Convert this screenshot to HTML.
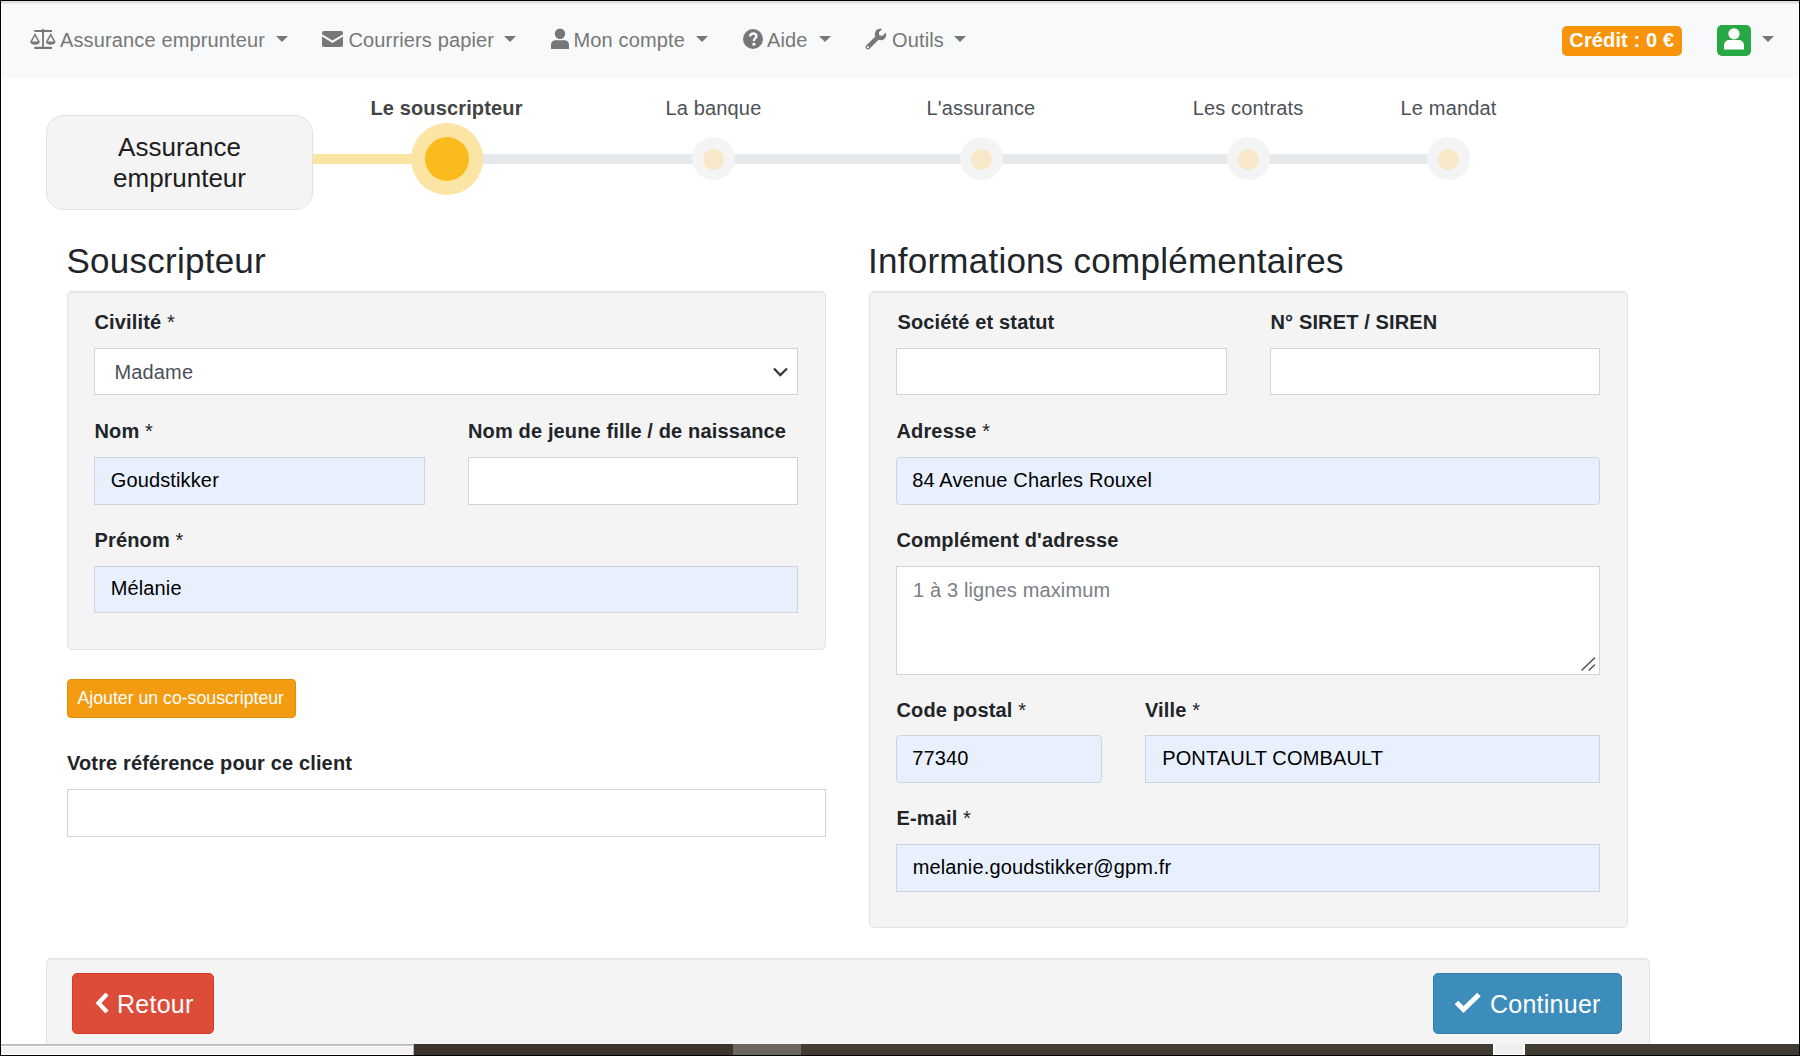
<!DOCTYPE html>
<html><head><meta charset="utf-8"><style>
html,body{margin:0;padding:0;width:1800px;height:1056px;overflow:hidden;background:#fff;position:relative}
body{font-family:"Liberation Sans",sans-serif}
.t{position:absolute;white-space:nowrap}
.r{position:absolute}
</style></head><body>
<div class="r" style="left:0px;top:0px;width:1800px;height:1px;background:#000"></div>
<div class="r" style="left:0px;top:0px;width:1px;height:1056px;background:#000"></div>
<div class="r" style="left:1799px;top:0px;width:1px;height:1056px;background:#000"></div>
<div class="r" style="left:1px;top:1px;width:1798px;height:1px;background:#dfe0e2"></div>
<div class="r" style="left:1px;top:2px;width:1798px;height:1px;background:#dadbdd"></div>
<div class="r" style="left:1px;top:3px;width:1798px;height:1px;background:#ebecee"></div>
<div class="r" style="left:2px;top:4px;width:1796px;height:74px;background:#f8f9fa"></div>
<svg class="r" style="left:30px;top:28px" width="26" height="22" viewBox="0 0 26 22"><g fill="#777">
<rect x="4.3" y="2" width="17.7" height="2"/><path d="M13 0.6 L15.2 3 L13 5.6 L10.8 3Z"/><rect x="12.1" y="4" width="1.8" height="15"/><rect x="4.3" y="18.8" width="17.7" height="2.2"/>
<path d="M1 13.8 L5 6.6 L9 13.8" fill="none" stroke="#777" stroke-width="1.5"/><path d="M0.2 13.5 H9.9 C9.7 17.8 0.4 17.8 0.2 13.5Z"/>
<path d="M16.7 13.8 L20.7 6.6 L24.7 13.8" fill="none" stroke="#777" stroke-width="1.5"/><path d="M15.9 13.5 H25.6 C25.4 17.8 16.1 17.8 15.9 13.5Z"/>
</g></svg>
<svg class="r" style="left:322px;top:31px" width="21" height="16" viewBox="0 0 21 16"><path fill="#777" d="M2 0 H19 A2 2 0 0 1 21 2 V3.2 L10.5 9.6 L0 3.2 V2 A2 2 0 0 1 2 0Z M0 5.6 L10.5 12 L21 5.6 V14 A2 2 0 0 1 19 16 H2 A2 2 0 0 1 0 14Z"/></svg>
<svg class="r" style="left:551px;top:28px" width="18" height="21" viewBox="0 0 18 21"><g fill="#777"><circle cx="9" cy="5.7" r="5.2"/><path d="M0 21 V17 C0 13.5 2.5 12.2 5 12.2 H13 C15.5 12.2 18 13.5 18 17 V21Z"/></g></svg>
<svg class="r" style="left:743px;top:29px" width="20" height="20" viewBox="0 0 20 20"><circle cx="10" cy="10" r="10" fill="#777"/><path d="M7 7.6 C7 5.6 8.4 4.5 10.2 4.5 C12.1 4.5 13.4 5.6 13.4 7.2 C13.4 9.3 10.9 9.5 10.9 11.4 V12" fill="none" stroke="#f8f9fa" stroke-width="2.4"/><circle cx="10.9" cy="15.2" r="1.6" fill="#f8f9fa"/></svg>
<svg class="r" style="left:865px;top:28px" width="22" height="22" viewBox="0 0 22 22"><path fill="#777" d="M20.8 4.6 L17.6 7.8 L14.4 7.4 L14 4.2 L17.2 1 C14.8 0.2 12 0.9 10.7 3 C9.6 4.7 9.5 6.7 10.3 8.4 L1.2 17.5 C0.3 18.4 0.3 19.9 1.2 20.8 C2.1 21.7 3.6 21.7 4.5 20.8 L13.6 11.7 C15.3 12.5 17.4 12.3 19 11.3 C21 10 21.7 7.2 20.8 4.6Z"/><circle cx="2.9" cy="19.1" r="1.1" fill="#f8f9fa"/></svg>
<div class="t" style="left:60px;top:29.77px;font-size:20px;line-height:20px;color:#777;font-weight:normal;letter-spacing:0.14px;">Assurance emprunteur</div>
<div class="r" style="left:276px;top:36px;width:0;height:0;border-top:6px solid #777;border-left:6px solid transparent;border-right:6px solid transparent"></div>
<div class="t" style="left:348.5px;top:29.77px;font-size:20px;line-height:20px;color:#777;font-weight:normal;letter-spacing:0.14px;">Courriers papier</div>
<div class="r" style="left:504px;top:36px;width:0;height:0;border-top:6px solid #777;border-left:6px solid transparent;border-right:6px solid transparent"></div>
<div class="t" style="left:573.5px;top:29.77px;font-size:20px;line-height:20px;color:#777;font-weight:normal;letter-spacing:0.14px;">Mon compte</div>
<div class="r" style="left:696px;top:36px;width:0;height:0;border-top:6px solid #777;border-left:6px solid transparent;border-right:6px solid transparent"></div>
<div class="t" style="left:767px;top:29.77px;font-size:20px;line-height:20px;color:#777;font-weight:normal;letter-spacing:0.14px;">Aide</div>
<div class="r" style="left:819px;top:36px;width:0;height:0;border-top:6px solid #777;border-left:6px solid transparent;border-right:6px solid transparent"></div>
<div class="t" style="left:892px;top:29.77px;font-size:20px;line-height:20px;color:#777;font-weight:normal;letter-spacing:0.14px;">Outils</div>
<div class="r" style="left:954px;top:36px;width:0;height:0;border-top:6px solid #777;border-left:6px solid transparent;border-right:6px solid transparent"></div>
<div class="r" style="left:1562px;top:26px;width:120px;height:30px;background:#f8930d;border-radius:5px"></div>
<div class="t" style="left:1569.3px;top:29.67px;font-size:20px;line-height:20px;color:#fff;font-weight:bold;letter-spacing:0.14px;">Crédit : 0 €</div>
<div class="r" style="left:1717px;top:25px;width:34px;height:31px;background:#28a745;border-radius:5px"></div>
<svg class="r" style="left:1723px;top:28px" width="22" height="22" viewBox="0 0 22 22"><g fill="#fff"><circle cx="11" cy="5.8" r="5.6"/><path d="M1 21.6 V17.5 C1 14 3.5 12 6.5 12 H15.5 C18.5 12 21 14 21 17.5 V21.6Z"/></g></svg>
<div class="r" style="left:1762px;top:36px;width:0;height:0;border-top:6px solid #777;border-left:6px solid transparent;border-right:6px solid transparent"></div>
<div class="r" style="left:46px;top:115px;width:267px;height:95px;background:#f4f4f4;border:1px solid #e2e2e2;border-radius:18px;box-sizing:border-box"></div>
<div class="t" style="left:46px;top:132px;width:267px;text-align:center;font-size:26px;line-height:31px;color:#1e1e1e">Assurance<br>emprunteur</div>
<div class="r" style="left:313px;top:154px;width:134px;height:10px;background:#fae5a5"></div>
<div class="r" style="left:447px;top:154px;width:1002px;height:10px;background:#e6e9ec"></div>
<div class="r" style="left:411px;top:123px;width:72px;height:72px;background:#fae5a5;border-radius:50%"></div>
<div class="r" style="left:425px;top:137px;width:44px;height:44px;background:#fabb1c;border-radius:50%"></div>
<div class="r" style="left:692.3px;top:137.1px;width:43px;height:43px;background:#f4f4f4;border-radius:50%"></div>
<div class="r" style="left:703.3px;top:148.6px;width:21px;height:21px;background:#f7e9c8;border-radius:50%"></div>
<div class="r" style="left:959.8px;top:137.1px;width:43px;height:43px;background:#f4f4f4;border-radius:50%"></div>
<div class="r" style="left:970.8px;top:148.6px;width:21px;height:21px;background:#f7e9c8;border-radius:50%"></div>
<div class="r" style="left:1227.1px;top:137.1px;width:43px;height:43px;background:#f4f4f4;border-radius:50%"></div>
<div class="r" style="left:1238.1px;top:148.6px;width:21px;height:21px;background:#f7e9c8;border-radius:50%"></div>
<div class="r" style="left:1427.1px;top:137.1px;width:43px;height:43px;background:#f4f4f4;border-radius:50%"></div>
<div class="r" style="left:1438.1px;top:148.6px;width:21px;height:21px;background:#f7e9c8;border-radius:50%"></div>
<div class="t" style="left:296.5px;top:98.07px;width:300px;text-align:center;font-size:20px;line-height:20px;color:#444;font-weight:bold;letter-spacing:0.14px">Le souscripteur</div>
<div class="t" style="left:563.5px;top:98.07px;width:300px;text-align:center;font-size:20px;line-height:20px;color:#4d5156;font-weight:normal;letter-spacing:0.14px">La banque</div>
<div class="t" style="left:831.0px;top:98.07px;width:300px;text-align:center;font-size:20px;line-height:20px;color:#4d5156;font-weight:normal;letter-spacing:0.14px">L'assurance</div>
<div class="t" style="left:1098.0px;top:98.07px;width:300px;text-align:center;font-size:20px;line-height:20px;color:#4d5156;font-weight:normal;letter-spacing:0.14px">Les contrats</div>
<div class="t" style="left:1298.5px;top:98.07px;width:300px;text-align:center;font-size:20px;line-height:20px;color:#4d5156;font-weight:normal;letter-spacing:0.14px">Le mandat</div>
<div class="t" style="left:66.5px;top:243.17px;font-size:35px;line-height:35px;color:#212529;font-weight:normal;letter-spacing:0.25px;">Souscripteur</div>
<div class="t" style="left:868px;top:243.17px;font-size:35px;line-height:35px;color:#212529;font-weight:normal;letter-spacing:0.25px;">Informations complémentaires</div>
<div class="r" style="left:67px;top:291px;width:759px;height:359px;background:#f4f4f4;border:1px solid #e3e3e3;border-radius:5px;box-sizing:border-box;box-shadow:inset 0 1px 1px rgba(0,0,0,.05)"></div>
<div class="r" style="left:869px;top:291px;width:759px;height:637px;background:#f4f4f4;border:1px solid #e3e3e3;border-radius:5px;box-sizing:border-box;box-shadow:inset 0 1px 1px rgba(0,0,0,.05)"></div>
<div class="t" style="left:94.5px;top:312.27px;font-size:20px;line-height:20px;color:#212529;font-weight:bold;letter-spacing:0.14px;">Civilité <span style="font-weight:normal">*</span></div>
<div class="r" style="left:94px;top:348px;width:704px;height:47px;background:#fff;border:1px solid #ced4da;box-sizing:border-box;border-radius:0px"></div>
<div class="t" style="left:114.5px;top:361.77px;font-size:20px;line-height:20px;color:#495057;font-weight:normal;letter-spacing:0.14px;">Madame</div>
<svg class="r" style="left:772px;top:366px" width="17" height="12" viewBox="0 0 17 12"><path d="M2 2.5 L8.3 9 L15 2.5" fill="none" stroke="#343a40" stroke-width="2.3"/></svg>
<div class="t" style="left:94.5px;top:420.77px;font-size:20px;line-height:20px;color:#212529;font-weight:bold;letter-spacing:0.14px;">Nom <span style="font-weight:normal">*</span></div>
<div class="t" style="left:468px;top:420.77px;font-size:20px;line-height:20px;color:#212529;font-weight:bold;letter-spacing:0.14px;">Nom de jeune fille / de naissance</div>
<div class="r" style="left:94px;top:457px;width:331px;height:48px;background:#e8f0fe;border:1px solid #ced4da;box-sizing:border-box;border-radius:0px"></div>
<div class="t" style="left:110.7px;top:470.07px;font-size:20px;line-height:20px;color:#000;font-weight:normal;letter-spacing:0.14px;">Goudstikker</div>
<div class="r" style="left:468px;top:457px;width:330px;height:48px;background:#fff;border:1px solid #ced4da;box-sizing:border-box;border-radius:0px"></div>
<div class="t" style="left:94.5px;top:530.07px;font-size:20px;line-height:20px;color:#212529;font-weight:bold;letter-spacing:0.14px;">Prénom <span style="font-weight:normal">*</span></div>
<div class="r" style="left:94px;top:566px;width:704px;height:47px;background:#e8f0fe;border:1px solid #ced4da;box-sizing:border-box;border-radius:0px"></div>
<div class="t" style="left:110.7px;top:578.37px;font-size:20px;line-height:20px;color:#000;font-weight:normal;letter-spacing:0.14px;">Mélanie</div>
<div class="r" style="left:67px;top:679px;width:229px;height:39px;background:#f39c12;border:1px solid #e08e0b;border-radius:4px;box-sizing:border-box"></div>
<div class="t" style="left:77.5px;top:689.72px;font-size:17.7px;line-height:17.7px;color:#fff;font-weight:normal;letter-spacing:0px;">Ajouter un co-souscripteur</div>
<div class="t" style="left:67px;top:752.77px;font-size:20px;line-height:20px;color:#212529;font-weight:bold;letter-spacing:0.14px;">Votre référence pour ce client</div>
<div class="r" style="left:67px;top:789px;width:759px;height:48px;background:#fff;border:1px solid #ced4da;box-sizing:border-box;border-radius:0px"></div>
<div class="t" style="left:897.5px;top:312.47px;font-size:20px;line-height:20px;color:#212529;font-weight:bold;letter-spacing:0.14px;">Société et statut</div>
<div class="t" style="left:1270.5px;top:312.47px;font-size:20px;line-height:20px;color:#212529;font-weight:bold;letter-spacing:0.14px;">N° SIRET / SIREN</div>
<div class="r" style="left:896px;top:348px;width:331px;height:47px;background:#fff;border:1px solid #ced4da;box-sizing:border-box;border-radius:0px"></div>
<div class="r" style="left:1270px;top:348px;width:330px;height:47px;background:#fff;border:1px solid #ced4da;box-sizing:border-box;border-radius:0px"></div>
<div class="t" style="left:896.5px;top:420.97px;font-size:20px;line-height:20px;color:#212529;font-weight:bold;letter-spacing:0.14px;">Adresse <span style="font-weight:normal">*</span></div>
<div class="r" style="left:896px;top:457px;width:704px;height:48px;background:#e8f0fe;border:1px solid #ced4da;box-sizing:border-box;border-radius:4px"></div>
<div class="t" style="left:912.2px;top:470.07px;font-size:20px;line-height:20px;color:#000;font-weight:normal;letter-spacing:0.14px;">84 Avenue Charles Rouxel</div>
<div class="t" style="left:896.5px;top:529.67px;font-size:20px;line-height:20px;color:#212529;font-weight:bold;letter-spacing:0.14px;">Complément d'adresse</div>
<div class="r" style="left:896px;top:566px;width:704px;height:109px;background:#fff;border:1px solid #ced4da;box-sizing:border-box;border-radius:0px"></div>
<div class="t" style="left:913px;top:579.57px;font-size:20px;line-height:20px;color:#7a8086;font-weight:normal;letter-spacing:0.14px;">1 à 3 lignes maximum</div>
<svg class="r" style="left:1580px;top:656px" width="16" height="16" viewBox="0 0 16 16"><path d="M2 14 L14.5 2 M9.2 14 L14.5 9" fill="none" stroke="#555" stroke-width="1.6" stroke-linecap="round"/></svg>
<div class="t" style="left:896.5px;top:700.17px;font-size:20px;line-height:20px;color:#212529;font-weight:bold;letter-spacing:0.14px;">Code postal <span style="font-weight:normal">*</span></div>
<div class="t" style="left:1145px;top:700.17px;font-size:20px;line-height:20px;color:#212529;font-weight:bold;letter-spacing:0.14px;">Ville <span style="font-weight:normal">*</span></div>
<div class="r" style="left:896px;top:735px;width:206px;height:48px;background:#e8f0fe;border:1px solid #ced4da;box-sizing:border-box;border-radius:4px"></div>
<div class="t" style="left:912.2px;top:747.57px;font-size:20px;line-height:20px;color:#000;font-weight:normal;letter-spacing:0.14px;">77340</div>
<div class="r" style="left:1145px;top:735px;width:455px;height:48px;background:#e8f0fe;border:1px solid #ced4da;box-sizing:border-box;border-radius:0px"></div>
<div class="t" style="left:1162.2px;top:747.57px;font-size:20px;line-height:20px;color:#000;font-weight:normal;letter-spacing:0.14px;">PONTAULT COMBAULT</div>
<div class="t" style="left:896.5px;top:808.47px;font-size:20px;line-height:20px;color:#212529;font-weight:bold;letter-spacing:0.14px;">E-mail <span style="font-weight:normal">*</span></div>
<div class="r" style="left:896px;top:844px;width:704px;height:48px;background:#e8f0fe;border:1px solid #ced4da;box-sizing:border-box;border-radius:0px"></div>
<div class="t" style="left:912.7px;top:857.47px;font-size:20px;line-height:20px;color:#000;font-weight:normal;letter-spacing:0.14px;">melanie.goudstikker@gpm.fr</div>
<div class="r" style="left:46px;top:958px;width:1604px;height:100px;background:#f4f4f4;border:1px solid #e3e3e3;border-radius:5px;box-sizing:border-box;box-shadow:inset 0 1px 1px rgba(0,0,0,.05)"></div>
<div class="r" style="left:72px;top:973px;width:142px;height:61px;background:#dd4b39;border:1px solid #d73925;border-radius:5px;box-sizing:border-box"></div>
<svg class="r" style="left:94px;top:991px" width="16" height="24" viewBox="0 0 16 24"><path d="M13 3 L4.5 12 L13 21" fill="none" stroke="#fff" stroke-width="4.2" stroke-linejoin="miter"/></svg>
<div class="t" style="left:117px;top:991.64px;font-size:25px;line-height:25px;color:#fff;font-weight:normal;letter-spacing:0.25px;">Retour</div>
<div class="r" style="left:1433px;top:973px;width:189px;height:61px;background:#3c8dbc;border:1px solid #367fa9;border-radius:5px;box-sizing:border-box"></div>
<svg class="r" style="left:1453px;top:991px" width="30" height="22" viewBox="0 0 30 22"><path d="M3.5 11.5 L10.5 18.5 L26 3.5" fill="none" stroke="#fff" stroke-width="5"/></svg>
<div class="t" style="left:1490px;top:991.74px;font-size:25px;line-height:25px;color:#fff;font-weight:normal;letter-spacing:0.25px;">Continuer</div>
<div class="r" style="left:1px;top:1044px;width:413px;height:11px;background:#f2f2f2"></div>
<div class="r" style="left:1px;top:1044px;width:413px;height:1px;background:#b8b8b8"></div>
<div class="r" style="left:1px;top:1045px;width:413px;height:1px;background:#c8c8c8"></div>
<div class="r" style="left:1px;top:1046px;width:413px;height:1px;background:#f8f8f8"></div>
<div class="r" style="left:1px;top:1054px;width:413px;height:1px;background:#fff"></div>
<div class="r" style="left:413px;top:1044px;width:1px;height:11px;background:#b5b7b7"></div>
<div class="r" style="left:414px;top:1044px;width:319px;height:11px;background:#3e332a"></div>
<div class="r" style="left:733px;top:1044px;width:68px;height:11px;background:#6b6760"></div>
<div class="r" style="left:801px;top:1044px;width:692px;height:11px;background:#413b34"></div>
<div class="r" style="left:1493px;top:1044px;width:32px;height:11px;background:#fff"></div>
<div class="r" style="left:1495px;top:1044px;width:28px;height:10px;background:#efefef"></div>
<div class="r" style="left:1525px;top:1044px;width:274px;height:11px;background:#403c33"></div>
<div class="r" style="left:0px;top:1055px;width:1800px;height:1px;background:#000"></div>
</body></html>
